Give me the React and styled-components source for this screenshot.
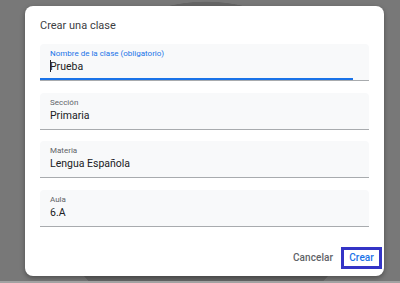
import React from "react";
import styled, { createGlobalStyle } from "styled-components";

const GlobalStyle = createGlobalStyle`
  html, body {
    margin: 0;
    padding: 0;
  }
  body {
    width: 400px;
    height: 283px;
    overflow: hidden;
    font-family: Roboto, "Liberation Sans", Arial, sans-serif;
    background:
      radial-gradient(circle at 206px 166px, #666666 0 164px, transparent 164.6px),
      #787878;
  }
`;

const Page = styled.div`
  display: flex;
  flex-direction: column;
  height: 283px;
`;

const Backdrop = styled.div`
  flex: 1;
  padding: 6px 0 0 25px;
`;

const BottomStrip = styled.div`
  height: 2px;
  background: #a2a2a2;
`;

const Dialog = styled.div`
  width: 359px;
  height: 270px;
  box-sizing: border-box;
  background: #ffffff;
  border-radius: 8px;
  box-shadow: 0 2px 5px rgba(0, 0, 0, 0.35);
  display: flex;
  flex-direction: column;
`;

const Title = styled.h2`
  margin: 12.5px 0 0;
  padding: 0 15px;
  font-size: 11px;
  line-height: 14px;
  font-weight: 400;
  color: #3c4043;
`;

const Body = styled.div`
  margin-top: 11.5px;
  padding: 0 15px;
  display: flex;
  flex-direction: column;
  gap: 11.5px;
`;

const Field = styled.div`
  position: relative;
  height: 37px;
  box-sizing: border-box;
  padding: 5px 10px 0;
  background: #f8f9fa;
  border-radius: 4px 4px 0 0;
  border-bottom: 1px solid #a8abae;

  &::after {
    content: "";
    display: ${(p) => (p.focused ? "block" : "none")};
    position: absolute;
    left: 0;
    bottom: 0;
    width: 95%;
    height: 2px;
    background: #1a73e8;
  }
`;

const Label = styled.div`
  font-size: 8px;
  line-height: 10px;
  color: ${(p) => (p.focused ? "#1a73e8" : "#5f6368")};
`;

const Value = styled.div`
  margin-top: 1px;
  font-size: 10.5px;
  line-height: 13px;
  color: #202124;
  white-space: nowrap;
`;

const Caret = styled.span`
  display: inline-block;
  width: 1px;
  height: 12px;
  margin-right: -1px;
  vertical-align: -2px;
  background: #202124;
`;

const Footer = styled.div`
  margin-top: auto;
  padding: 0 2px 7px 0;
  display: flex;
  justify-content: flex-end;
  align-items: center;
`;

const TextButton = styled.button`
  height: 22px;
  box-sizing: border-box;
  padding: 0 ${(p) => (p.primary ? "5px" : "8px")};
  border: ${(p) => (p.primary ? "3px solid #3434c6" : "none")};
  background: transparent;
  font-family: Roboto, "Liberation Sans", Arial, sans-serif;
  font-size: 10px;
  font-weight: 500;
  letter-spacing: 0.1px;
  line-height: 16px;
  color: ${(p) => (p.primary ? "#1a73e8" : "#5f6368")};
  cursor: pointer;
`;

const fields = [
  { label: "Nombre de la clase (obligatorio)", value: "Prueba", focused: true },
  { label: "Sección", value: "Primaria" },
  { label: "Materia", value: "Lengua Española" },
  { label: "Aula", value: "6.A" },
];

export default function App() {
  return (
    <>
      <GlobalStyle />
      <Page>
        <Backdrop>
          <Dialog>
            <Title>Crear una clase</Title>
            <Body>
              {fields.map((f) => (
                <Field key={f.label} focused={f.focused}>
                  <Label focused={f.focused}>{f.label}</Label>
                  <Value>
                    {f.focused && <Caret />}
                    {f.value}
                  </Value>
                </Field>
              ))}
            </Body>
            <Footer>
              <TextButton>Cancelar</TextButton>
              <TextButton primary>Crear</TextButton>
            </Footer>
          </Dialog>
        </Backdrop>
        <BottomStrip />
      </Page>
    </>
  );
}
